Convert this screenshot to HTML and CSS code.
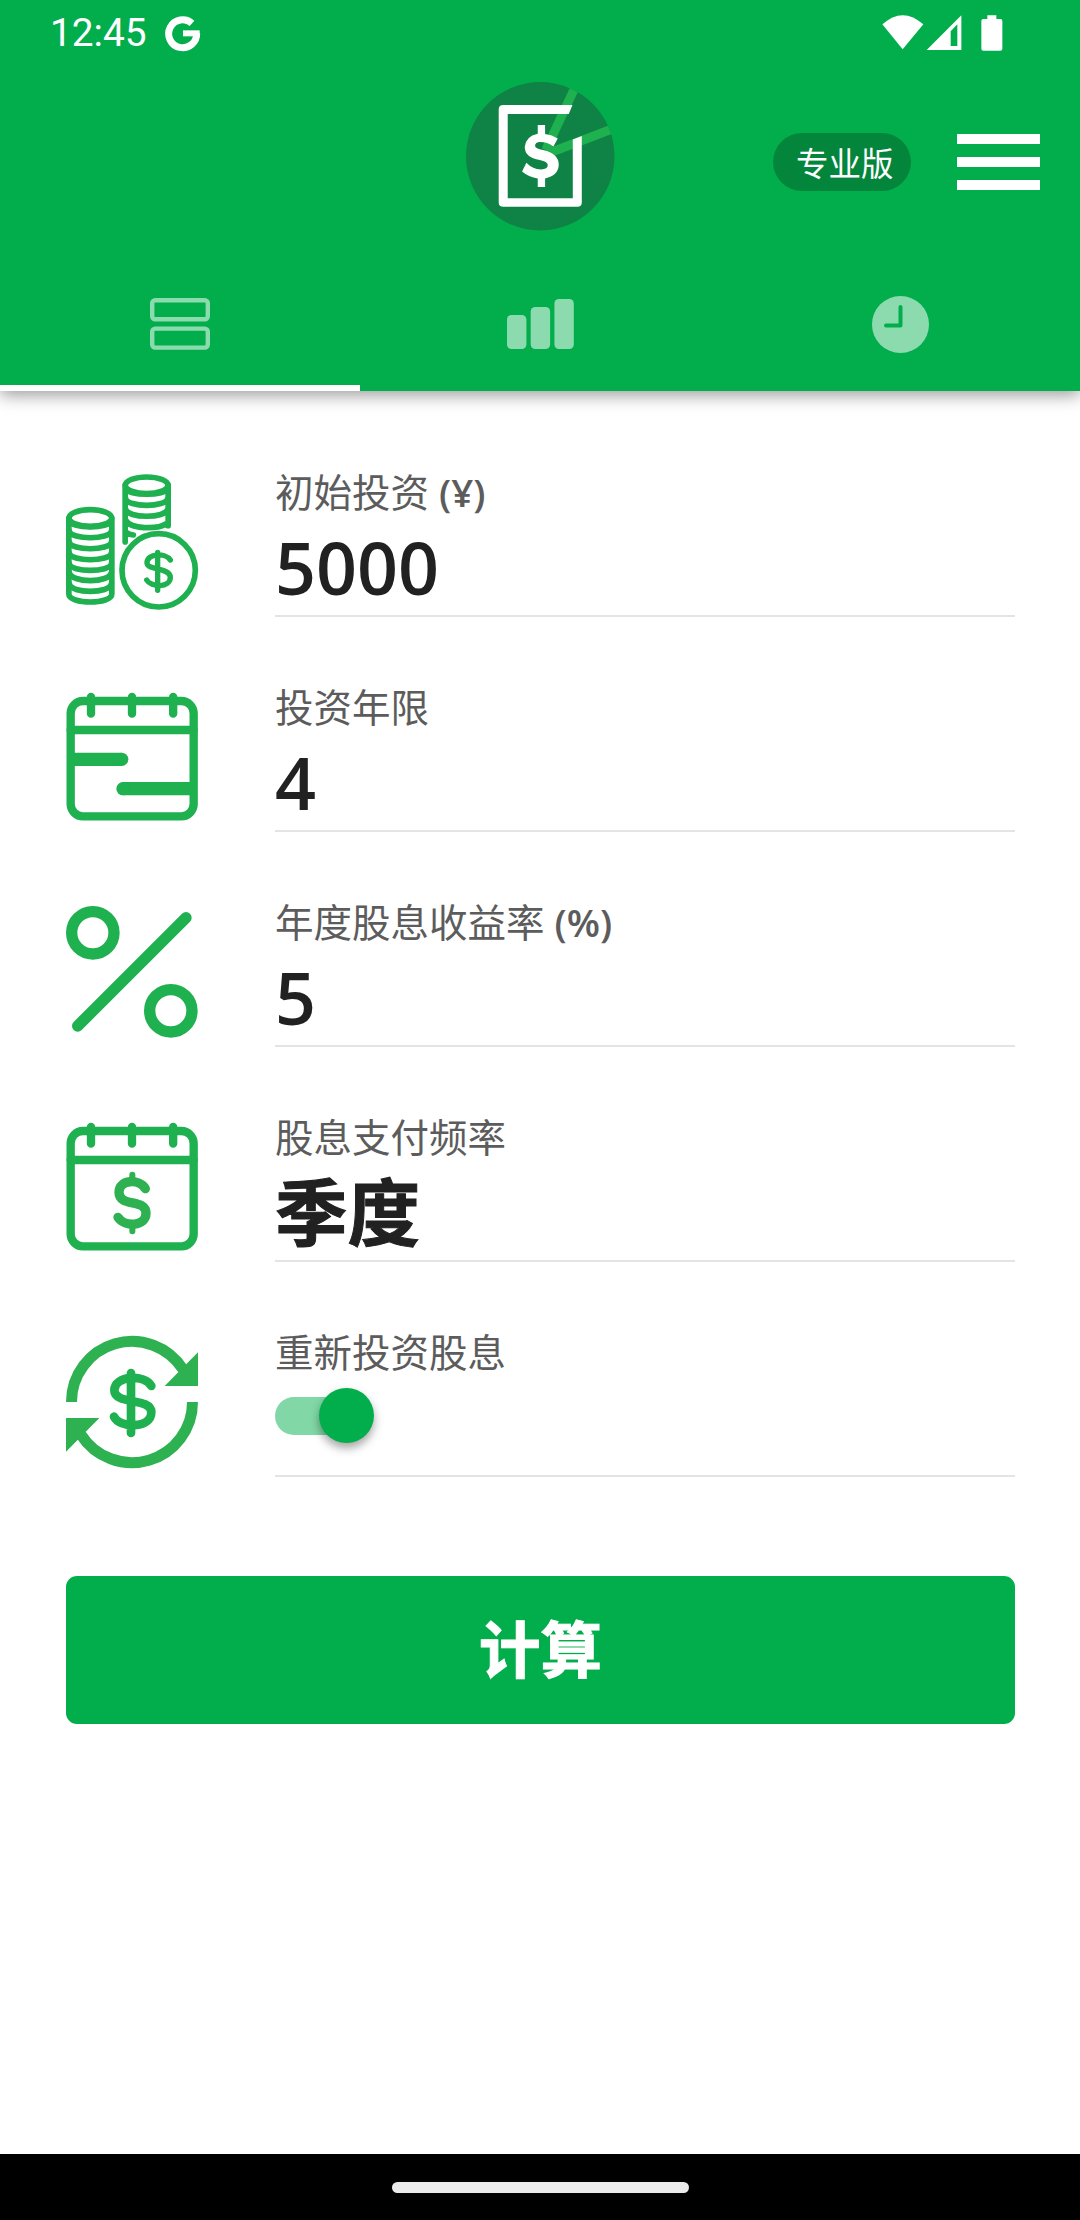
FILE: index.html
```html
<!DOCTYPE html>
<html lang="zh-CN">
<head>
<meta charset="utf-8">
<title>股息计算器</title>
<link rel="stylesheet" href="styles.css">
</head>
<body>
<div class="app">
  <header class="header">
    <div class="status">
      <span class="clock">12:45</span>
      <svg class="google" viewBox="0 0 102 105"><path d="M78 22A42 42 0 1 0 92 52" fill="none" stroke="#fff" stroke-width="21"/><path d="M51 43H101V61H51Z" fill="#fff"/></svg>
      <svg class="signals" viewBox="428 45 362 108" fill="#fff">
        <path d="M429 73Q490 18 552 73L490 148Z"/>
        <path fill-rule="evenodd" d="M562 150L666 46V150ZM634 94V138H654V73Z"/>
        <path d="M744 46H771V57H783Q789 57 789 63V146Q789 152 783 152H732Q726 152 726 146V63Q726 57 732 57H744Z"/>
      </svg>
    </div>
    <div class="toolbar">
      <svg class="logo" viewBox="79 36 445 445">
        <defs><clipPath id="disc"><circle cx="301.500" cy="258.500" r="222.500"/></clipPath></defs>
        <circle cx="301.500" cy="258.500" r="222.500" fill="#0f8345"/>
        <g clip-path="url(#disc)" stroke="#1fb04f" stroke-width="27"><path d="M318 240L416 30M322 251L540 168"/></g>
        <path fill="#fff" fill-rule="evenodd" d="M191 105H398L387 132H204V384H399V208L426 198V397Q426 410 412 410H191Q177 410 177 397V118Q177 105 191 105Z"/>
        <path d="M294 165H316V192Q337 195 354 205L341 229Q323 216 301 216Q286 217 286 227Q286 236 310 240Q357 250 357 285Q355 317 316 325V351H294V325Q267 321 247 304L260 278Q278 297 304 298Q324 298 324 285Q324 275 300 270Q255 262 255 231Q257 199 294 191Z" fill="#fff"/>
      </svg>
      <span class="pro">专业版</span>
      <div class="menu"><i></i><i></i><i></i></div>
    </div>
    <nav class="tabs">
      <div class="tab active"><svg class="rows-icon" viewBox="0 0 60 52" fill="none" stroke="currentColor" stroke-width="4.400"><rect x="2.200" y="2.200" width="55.600" height="19" rx="3"/><rect x="2.200" y="30.600" width="55.600" height="19" rx="3"/></svg></div>
      <div class="tab"><svg class="bars-icon" viewBox="0 0 67 50" fill="currentColor"><rect y="16" width="19.400" height="34" rx="4.500"/><rect x="23.700" y="8" width="19.400" height="42" rx="4.500"/><rect x="47.400" width="19.400" height="50" rx="4.500"/></svg></div>
      <div class="tab"><svg class="clock-icon" viewBox="0 0 57 57"><circle cx="28.500" cy="28.500" r="28.500" fill="currentColor"/><path d="M28.500 11V29.500H14" fill="none" stroke="#02ae4c" stroke-width="4" stroke-linecap="round" stroke-linejoin="round"/></svg></div>
    </nav>
  </header>
  <main class="form">
    <section class="row">
      <svg class="icon" viewBox="48 21 396 450">
        <g fill="none" stroke="#1fb04f" stroke-width="17" stroke-linecap="round">
          <ellipse cx="121" cy="174" rx="64" ry="25"/>
          <path d="M56.500 174V402C56.500 434 185.500 434 185.500 402V174"/>
          <path d="M58 182C62 207 180 207 184 182"/>
          <path d="M58 213C62 240 180 240 184 213M58 246C62 273 180 273 184 246M58 279C62 306 180 306 184 279M58 311C62 338 180 338 184 311M58 337C62 370 180 370 184 337M58 371C62 402 180 402 184 371"/>
          <ellipse cx="290" cy="76" rx="64" ry="25"/>
          <path d="M225.500 76V246M354.500 76V197M227 84C231 109 349 109 353 84M227 115C231 143 349 143 353 115M227 147C231 176 349 176 353 147M227 180C240 209 325 208 349 191M228 216Q237 224 250 225"/>
          <circle cx="326" cy="331" r="110"/>
          <path stroke-width="16" d="M323 277V391M361 300C347 278 291 279 291 309C291 331 361 322 361 352C361 384 303 383 290 360"/>
        </g>
      </svg>
      <div class="field"><label class="label">初始投资 <span>(¥)</span></label><div class="value">5000</div></div>
    </section>
    <section class="row">
      <svg class="icon" viewBox="48 6 396 450">
        <g fill="none" stroke="#1fb04f" stroke-width="25" stroke-linecap="round">
          <rect x="62" y="63" width="369" height="346" rx="37"/><path d="M62 150H431M123 51V101M246 51V101M369.500 51V101"/>
          <path stroke-width="40" stroke-linecap="butt" d="M62 238H216M218 326H431"/></g>
        <circle cx="215" cy="238" r="20" fill="#1fb04f"/><circle cx="219" cy="326" r="20" fill="#1fb04f"/>
      </svg>
      <div class="field"><label class="label">投资年限</label><div class="value">4</div></div>
    </section>
    <section class="row">
      <svg class="icon" viewBox="48 21 396 450" fill="none" stroke="#1fb04f" stroke-width="34">
        <circle cx="128.500" cy="128.500" r="63.500"/><circle cx="362.500" cy="362.500" r="63.500"/><path stroke-linecap="round" d="M83 408L408 83"/>
      </svg>
      <div class="field"><label class="label">年度股息收益率 <span>(%)</span></label><div class="value">5</div></div>
    </section>
    <section class="row">
      <svg class="icon" viewBox="48 6 396 450" fill="none" stroke-linecap="round">
        <g stroke="#1fb04f" stroke-width="25"><rect x="62" y="63" width="369" height="346" rx="37"/><path d="M62 150H431M123 51V101M246 51V101M369.500 51V101"/></g>
        <g stroke="#2eb150"><path stroke-width="28" d="M286 236C268 206 207 207 207 247C207 293 288 264 288 310C288 350 225 352 204 322"/><path stroke-width="18" d="M247 194V212M247 348V364"/></g>
      </svg>
      <div class="field"><label class="label">股息支付频率</label><div class="value cjk">季度</div></div>
    </section>
    <section class="row">
      <svg class="icon" viewBox="48 21 396 450">
        <g fill="none" stroke="#2eb150" stroke-width="33"><path d="M64.500 246A181.500 181.500 0 0 1 399 148M427.500 246A181.500 181.500 0 0 1 93 344"/></g>
        <path fill="#2eb150" d="M444 97V198H344ZM48 395V294H148Z"/>
        <g fill="none" stroke="#1fb04f" stroke-width="26" stroke-linecap="round"><path d="M243 159V339M304 198C286 162 193 165 193 211C193 256 304 231 304 277C304 327 208 325 192 290"/></g>
      </svg>
      <div class="field"><label class="label">重新投资股息</label><div class="value toggle"><div class="switch"></div></div></div>
    </section>
    <button class="submit">计算</button>
  </main>
  <footer class="navbar"><div class="handle"></div></footer>
</div>
</body>
</html>
```
FILE: styles.css
```css
* { box-sizing: border-box; }
body { margin: 0; background: #fff; font-family: "Open Sans", "Noto Sans CJK SC", sans-serif; }
svg { display: block; overflow: visible; flex: none; }
.app { width: 1080px; height: 2220px; display: flex; flex-direction: column; }
.header { height: 391px; background: #02ae4c; color: #fff; display: flex; flex-direction: column; box-shadow: 0 4px 16px rgba(0,0,0,.4); }
.status { height: 66px; padding: 0 77px 0 50px; display: flex; align-items: center; }
.clock { font: 400 38.8px/68px Roboto, sans-serif; width: 116px; }
.google { width: 34px; height: 35px; }
.signals { width: 120.700px; height: 36px; margin-left: auto; }
.toolbar { height: 192px; padding: 0 40px 0 466px; display: flex; align-items: center; }
.logo { width: 148.500px; height: 148.500px; margin-top: -12px; }
.pro { width: 138px; height: 58px; margin-left: auto; border-radius: 29px; background: #03853c; font: 400 32.500px/58px "Noto Sans CJK SC", sans-serif; padding-left: 23px; }
.menu { width: 83px; height: 56px; margin-left: 46px; display: flex; flex-direction: column; justify-content: space-between; }
.menu i { height: 10px; background: #fff; }
.tabs { flex: 1; display: grid; grid-template-columns: repeat(3, 1fr); }
.tab { display: flex; justify-content: center; align-items: center; padding-top: 5px; color: #8cdbae; border-bottom: 6px solid transparent; }
.tab.active { border-color: #fff; }
.rows-icon { width: 60px; height: 52px; }
.bars-icon { width: 67px; height: 50px; }
.clock-icon { width: 57px; height: 57px; }
.form { flex: 1; padding: 76px 65px 0 66px; display: flex; flex-direction: column; gap: 65px; }
.row { display: flex; gap: 77px; }
.icon { width: 132px; height: 150px; }
.field { flex: 1; height: 150px; border-bottom: 2px solid #e4e4e4; }
.label { display: block; height: 50px; font-size: 38.500px; line-height: 50px; color: #5c5c5c; }
.label span { font-weight: 600; }
.value { height: 98px; font-size: 71.700px; line-height: 100px; font-weight: 600; color: #212121; }
.value.cjk { font-weight: 700; font-size: 72.500px; -webkit-text-stroke: 1px #212121; }
.toggle { padding-top: 20px; }
.switch { position: relative; width: 85px; height: 38px; border-radius: 19px; background: #81d8a6; }
.switch::after { content: ""; position: absolute; left: 44px; top: -9px; width: 55px; height: 55px; border-radius: 50%; background: #02ae4c; box-shadow: 0 5px 10px rgba(0,0,0,.36); }
.submit { height: 148px; margin-top: 34px; flex: none; border: 0; border-radius: 11px; background: #02ae4c; color: #fff; font: 700 61.500px/142px "Noto Sans CJK SC", sans-serif; -webkit-text-stroke: 1px #fff; padding: 0 0 6px; }
.navbar { height: 66px; background: #000; display: flex; align-items: center; justify-content: center; }
.handle { width: 297px; height: 11px; border-radius: 6px; background: #ebebeb; }
```
